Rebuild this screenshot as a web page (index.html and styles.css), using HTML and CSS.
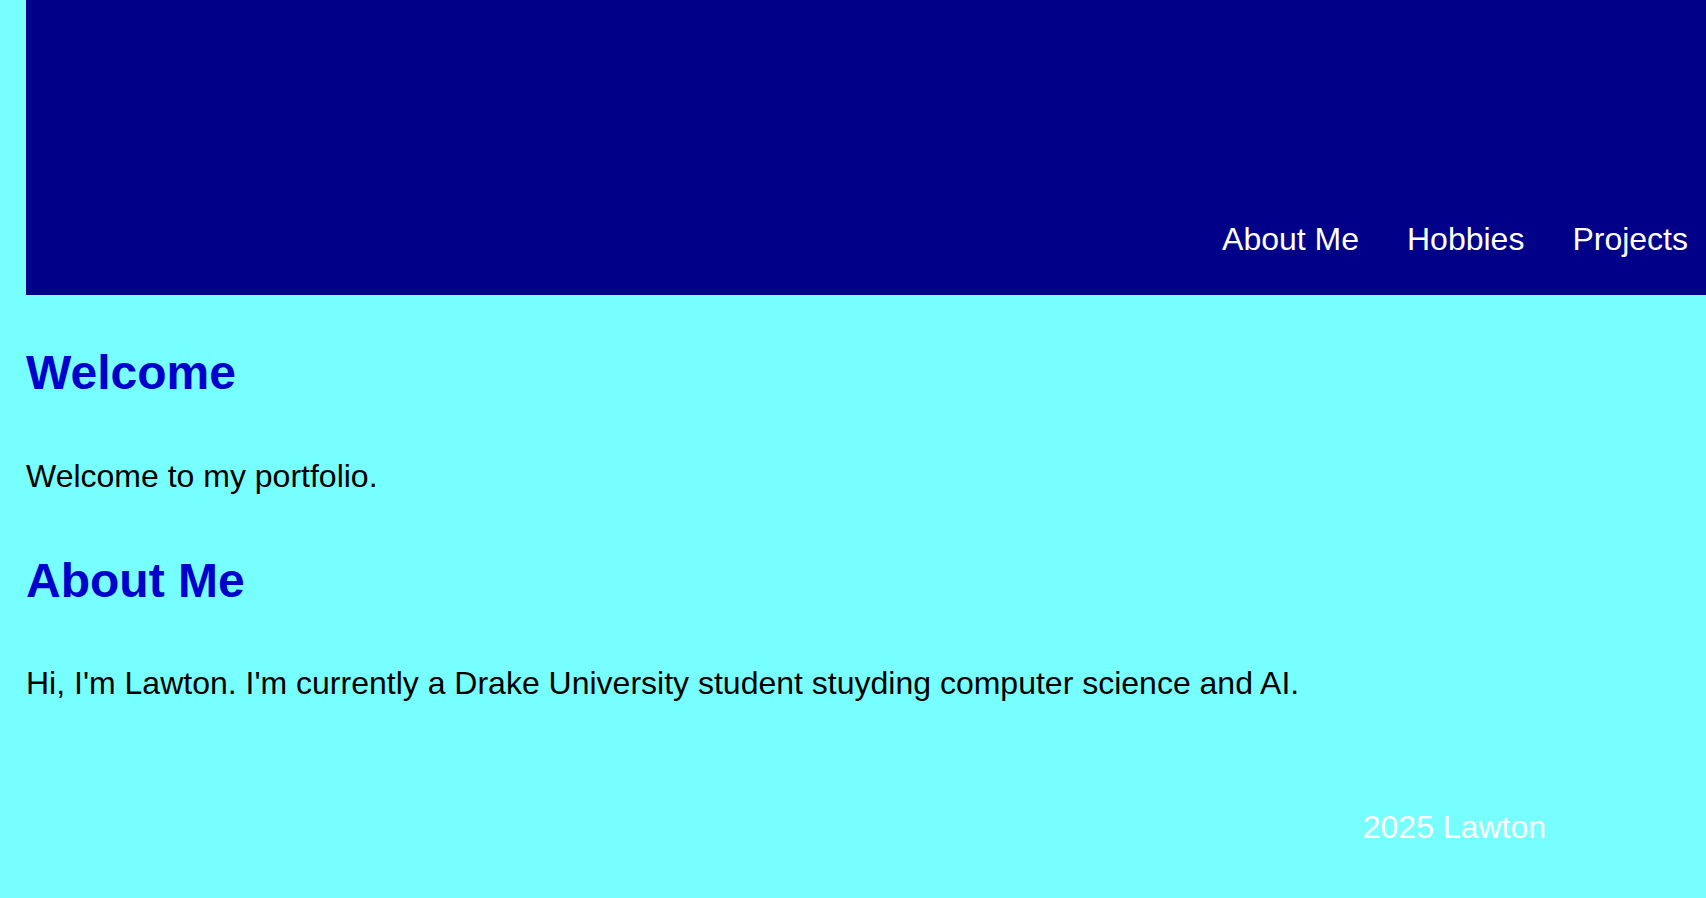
FILE: index.html
```html
<!DOCTYPE html>
<html lang="en">
<head>
<meta charset="utf-8">
<title>Lawton Portfolio</title>
<link rel="stylesheet" href="styles.css">
</head>
<body>
<header class="site-header">
  <nav class="nav">
    <a class="nav-link" href="#about">About Me</a>
    <a class="nav-link" href="#hobbies">Hobbies</a>
    <a class="nav-link" href="#projects">Projects</a>
  </nav>
</header>
<main class="content">
  <h1 class="heading heading-first">Welcome</h1>
  <p class="text text-first">Welcome to my portfolio.</p>
  <h2 class="heading heading-second" id="about">About Me</h2>
  <p class="text text-second">Hi, I'm Lawton. I'm currently a Drake University student stuyding computer science and AI.</p>
</main>
<footer class="site-footer">
  <p class="footer-text">2025 Lawton</p>
</footer>
</body>
</html>
```
FILE: styles.css
```css
html, body {
  margin: 0;
  padding: 0;
}
body {
  background: #77ffff;
  padding-left: 26px;
  font-family: "Liberation Sans", Arial, sans-serif;
  font-size: 32px;
  line-height: normal;
  overflow: hidden;
}
.site-header {
  background: #000088;
  height: 295px;
  box-sizing: border-box;
  display: flex;
  justify-content: flex-end;
  align-items: flex-end;
  padding: 0 18px 37px 0;
}
.nav {
  display: flex;
  gap: 48px;
}
.nav-link {
  color: #ffffff;
  text-decoration: none;
  font-size: 32px;
}
.content {
  display: block;
}
.heading {
  color: #0000cc;
  font-size: 48px;
  font-weight: bold;
  margin: 0;
}
.heading-first {
  margin-top: 50px;
}
.heading-second {
  margin-top: 58px;
}
.text {
  color: #000000;
  margin: 0;
}
.text-first {
  margin-top: 58px;
}
.text-second {
  margin-top: 57px;
}
.site-footer {
  display: flex;
  justify-content: flex-end;
  padding-right: 160px;
  margin-top: 107px;
}
.footer-text {
  color: #ffffff;
  margin: 0;
}
```
